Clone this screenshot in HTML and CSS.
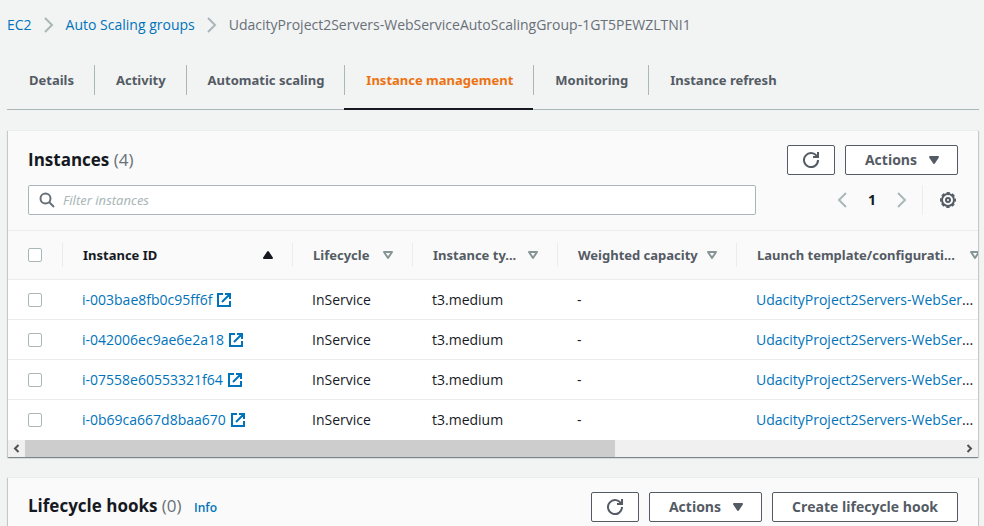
FILE: index.html
```html
<!DOCTYPE html>
<html lang="en">
<head>
<meta charset="utf-8">
<title>Auto Scaling groups</title>
<link rel="stylesheet" href="styles.css">
</head>
<body>
<svg class="sprite" aria-hidden="true">
  <symbol id="angle-right" viewBox="0 0 16 16"><path d="m4 1 7 7-7 7" fill="none" stroke="currentColor" stroke-width="2"/></symbol>
  <symbol id="angle-left" viewBox="0 0 16 16"><path d="M12 1 5 8l7 7" fill="none" stroke="currentColor" stroke-width="2"/></symbol>
  <symbol id="refresh" viewBox="0 0 16 16"><path d="M10 5h5V0M15 8a7 7 0 1 1-.7-3" fill="none" stroke="currentColor" stroke-width="2"/></symbol>
  <symbol id="caret-down" viewBox="0 0 16 16"><path d="M4 5h8l-4 6z" fill="currentColor" stroke="currentColor" stroke-width="2" stroke-linejoin="round"/></symbol>
  <symbol id="caret-up" viewBox="0 0 16 16"><path d="M4 11h8L8 5z" fill="currentColor" stroke="currentColor" stroke-width="2" stroke-linejoin="round"/></symbol>
  <symbol id="caret-open" viewBox="0 0 16 16"><path d="M4 5h8l-4 6z" fill="none" stroke="currentColor" stroke-width="2" stroke-linejoin="round"/></symbol>
  <symbol id="search" viewBox="0 0 16 16"><circle cx="6.500" cy="6.500" r="5" fill="none" stroke="currentColor" stroke-width="2"/><path d="m10 10 5 5" stroke="currentColor" stroke-width="2"/></symbol>
  <symbol id="external" viewBox="0 0 16 16"><path d="M9 2h5v5M6 10l8-8M14 9v5H2V2h5" fill="none" stroke="currentColor" stroke-width="2"/></symbol>
  <symbol id="gear" viewBox="0 0 16 16"><circle cx="8" cy="8" r="6" fill="none" stroke="currentColor" stroke-width="2"/><circle cx="8" cy="8" r="7.3" fill="none" stroke="currentColor" stroke-width="1.4" stroke-dasharray="3.4 2.33" stroke-dashoffset="1.7"/><circle cx="8" cy="8" r="2" fill="none" stroke="currentColor" stroke-width="2"/></symbol>
</svg>

<nav class="breadcrumb" aria-label="Breadcrumb">
  <a href="#">EC2</a>
  <svg class="icon crumb-sep"><use href="#angle-right"/></svg>
  <a href="#">Auto Scaling groups</a>
  <svg class="icon crumb-sep"><use href="#angle-right"/></svg>
  <span>UdacityProject2Servers-WebServiceAutoScalingGroup-1GT5PEWZLTNI1</span>
</nav>

<nav class="tabs" aria-label="Sections">
  <a class="tab" href="#"><span>Details</span></a>
  <a class="tab" href="#"><span>Activity</span></a>
  <a class="tab" href="#"><span>Automatic scaling</span></a>
  <a class="tab active" href="#" aria-current="page"><span>Instance management</span></a>
  <a class="tab" href="#"><span>Monitoring</span></a>
  <a class="tab" href="#"><span>Instance refresh</span></a>
</nav>

<section class="panel">
  <header class="panel-head">
    <h2>Instances <span class="count">(4)</span></h2>
    <div class="actions">
      <button class="btn" aria-label="Refresh instances"><svg class="icon"><use href="#refresh"/></svg></button>
      <button class="btn menu">Actions <svg class="icon"><use href="#caret-down"/></svg></button>
    </div>
  </header>
  <div class="toolbar">
    <label class="filter">
      <svg class="icon"><use href="#search"/></svg>
      <input type="text" placeholder="Filter instances" aria-label="Filter instances">
    </label>
    <div class="pager">
      <button class="plain" aria-label="Previous page"><svg class="icon"><use href="#angle-left"/></svg></button>
      <button class="plain page">1</button>
      <button class="plain" aria-label="Next page"><svg class="icon"><use href="#angle-right"/></svg></button>
    </div>
    <button class="plain settings" aria-label="Preferences"><svg class="icon"><use href="#gear"/></svg></button>
  </div>
  <div class="table-wrap">
    <table>
      <colgroup><col class="c-check"><col class="c-id"><col class="c-life"><col class="c-type"><col class="c-weight"><col class="c-launch"></colgroup>
      <thead>
        <tr>
          <th><input type="checkbox" aria-label="Select all"></th>
          <th class="sorted"><div class="head"><span>Instance ID</span><svg class="icon"><use href="#caret-up"/></svg></div></th>
          <th><div class="head"><span>Lifecycle</span><svg class="icon"><use href="#caret-open"/></svg></div></th>
          <th><div class="head"><span>Instance ty...</span><svg class="icon"><use href="#caret-open"/></svg></div></th>
          <th><div class="head"><span>Weighted capacity</span><svg class="icon"><use href="#caret-open"/></svg></div></th>
          <th><div class="head"><span>Launch template/configurati...</span><svg class="icon"><use href="#caret-open"/></svg></div></th>
        </tr>
      </thead>
      <tbody>
        <tr><td><input type="checkbox" aria-label="Select i-003bae8fb0c95ff6f"></td><td><a class="id" href="#">i-003bae8fb0c95ff6f<svg class="icon"><use href="#external"/></svg></a></td><td>InService</td><td>t3.medium</td><td>-</td><td><a href="#">UdacityProject2Servers-WebSer</a>...</td></tr>
        <tr><td><input type="checkbox" aria-label="Select i-042006ec9ae6e2a18"></td><td><a class="id" href="#">i-042006ec9ae6e2a18<svg class="icon"><use href="#external"/></svg></a></td><td>InService</td><td>t3.medium</td><td>-</td><td><a href="#">UdacityProject2Servers-WebSer</a>...</td></tr>
        <tr><td><input type="checkbox" aria-label="Select i-07558e60553321f64"></td><td><a class="id" href="#">i-07558e60553321f64<svg class="icon"><use href="#external"/></svg></a></td><td>InService</td><td>t3.medium</td><td>-</td><td><a href="#">UdacityProject2Servers-WebSer</a>...</td></tr>
        <tr><td><input type="checkbox" aria-label="Select i-0b69ca667d8baa670"></td><td><a class="id" href="#">i-0b69ca667d8baa670<svg class="icon"><use href="#external"/></svg></a></td><td>InService</td><td>t3.medium</td><td>-</td><td><a href="#">UdacityProject2Servers-WebSer</a>...</td></tr>
      </tbody>
    </table>
  </div>
  <div class="scrollbar" aria-hidden="true">
    <svg class="arrow" viewBox="0 0 17 17"><path d="M10.500 5 7 8.500l3.500 3.500" fill="none" stroke="currentColor" stroke-width="2"/></svg>
    <div class="track"><div class="thumb"></div></div>
    <svg class="arrow" viewBox="0 0 17 17"><path d="M6.500 5 10 8.500 6.500 12" fill="none" stroke="currentColor" stroke-width="2"/></svg>
  </div>
</section>

<section class="panel">
  <header class="panel-head">
    <h2>Lifecycle hooks <span class="count">(0)</span> <a class="info" href="#">Info</a></h2>
    <div class="actions">
      <button class="btn" aria-label="Refresh lifecycle hooks"><svg class="icon"><use href="#refresh"/></svg></button>
      <button class="btn menu">Actions <svg class="icon"><use href="#caret-down"/></svg></button>
      <button class="btn wide">Create lifecycle hook</button>
    </div>
  </header>
</section>
</body>
</html>
```
FILE: styles.css
```css
* { box-sizing: border-box; }

body {
  margin: 0;
  padding: 14px 5px 0 7px;
  background: #f2f3f3;
  color: #16191f;
  font: 14px/22px "Open Sans", "Noto Sans", sans-serif;
  overflow: hidden;
}

a { color: #0073bb; text-decoration: none; }
button, input { font: inherit; color: inherit; margin: 0; }
.sprite { display: none; }
.icon { width: 16px; height: 16px; flex: none; }

.breadcrumb { display: flex; align-items: center; gap: 9px; color: #687078; }
.crumb-sep { color: #aab7b8; }

.tabs {
  display: flex;
  margin-top: 16px;
  border-bottom: 1px solid #aab7b8;
}
.tab {
  padding: 13px 0;
  margin-bottom: -1px;
  border-bottom: 2px solid transparent;
  color: #545b64;
  font-family: "Noto Sans", sans-serif;
  font-size: 13px;
  font-weight: 700;
}
.tab span { display: block; padding: 4px 20px 4px 21px; border-left: 1px solid #aab7b8; }
.tab:first-child span { border-left-color: transparent; }
.tab.active { color: #ec7211; border-bottom-color: #16191f; }

.panel {
  margin: 20px 1px 0;
  background: #fafafa;
  border-top: 1px solid #eaeded;
  box-shadow: 0 1px 1px 0 rgba(0, 28, 36, .3), 1px 1px 1px 0 rgba(0, 28, 36, .15), -1px 1px 1px 0 rgba(0, 28, 36, .15);
}
.panel-head {
  display: flex;
  align-items: center;
  justify-content: space-between;
  padding: 14px 20px 10px;
}
h2 { margin: 0; font-size: 17px; line-height: 22px; font-weight: 700; }
.count { color: #687078; font-weight: 400; }
.info { margin-left: 8px; font-size: 12px; font-weight: 600; }
.actions { display: flex; gap: 10px; }
.btn {
  display: flex;
  align-items: center;
  gap: 9px;
  height: 30px;
  padding: 0 15px;
  border: 1px solid #545b64;
  border-radius: 2px;
  background: #fff;
  color: #545b64;
  font-weight: 700;
}
.menu { padding-left: 19px; }
.wide { padding: 0 19px; }

.toolbar { display: flex; align-items: center; padding: 0 22px 15px 20px; }
.filter {
  flex: 0 1 728px;
  display: flex;
  align-items: center;
  gap: 8px;
  height: 30px;
  padding: 0 10px;
  border: 1px solid #aab7b8;
  border-radius: 2px;
  background: #fff;
  color: #687078;
}
.filter input { flex: 1; border: 0; padding: 0; outline: 0; background: none; font-family: "Noto Sans", sans-serif; font-size: 13px; }
.filter input::placeholder { color: #aab7b8; font-style: italic; opacity: 1; }
.plain { border: 0; background: none; padding: 0; display: flex; color: #aab7b8; }
.pager { display: flex; align-items: center; gap: 18px; margin-left: auto; padding-right: 12px; }
.page { color: #16191f; font-weight: 700; }
.settings { height: 30px; align-items: center; padding-left: 17px; border-left: 1px solid #eaeded; color: #545b64; }

.table-wrap { overflow: hidden; background: #fff; }
table { width: 991px; table-layout: fixed; border-collapse: separate; border-spacing: 0; }
.c-check { width: 54px; }
.c-id { width: 230px; }
.c-life { width: 120px; }
.c-type { width: 145px; }
.c-weight { width: 179px; }
th { padding: 0; height: 50px; background: #fafafa; border: solid #eaeded; border-width: 1px 0; color: #545b64; font-family: "Noto Sans", sans-serif; font-size: 13px; text-align: left; }
td { height: 40px; padding: 0 10px 0 20px; border-bottom: 1px solid #eaeded; white-space: nowrap; }
th:first-child, td:first-child { padding-left: 20px; }
tbody tr:last-child td { border-bottom: 0; }
.head { display: flex; align-items: center; justify-content: space-between; height: 24px; padding: 0 16px 0 20px; border-left: 1px solid #eaeded; white-space: nowrap; }
.head .icon { color: #879596; }
.sorted .head, .sorted .head .icon { color: #16191f; }
.id { display: flex; align-items: center; gap: 4px; }
input[type="checkbox"] { appearance: none; display: block; width: 14px; height: 14px; border: 1px solid #aab7b8; border-radius: 2px; background: #fff; }

.scrollbar { display: flex; height: 17px; background: #f0f0f0; color: #505050; }
.arrow { width: 17px; height: 17px; flex: none; }
.track { flex: 1; }
.thumb { width: 63%; height: 17px; background: #cdcdcd; }
```
